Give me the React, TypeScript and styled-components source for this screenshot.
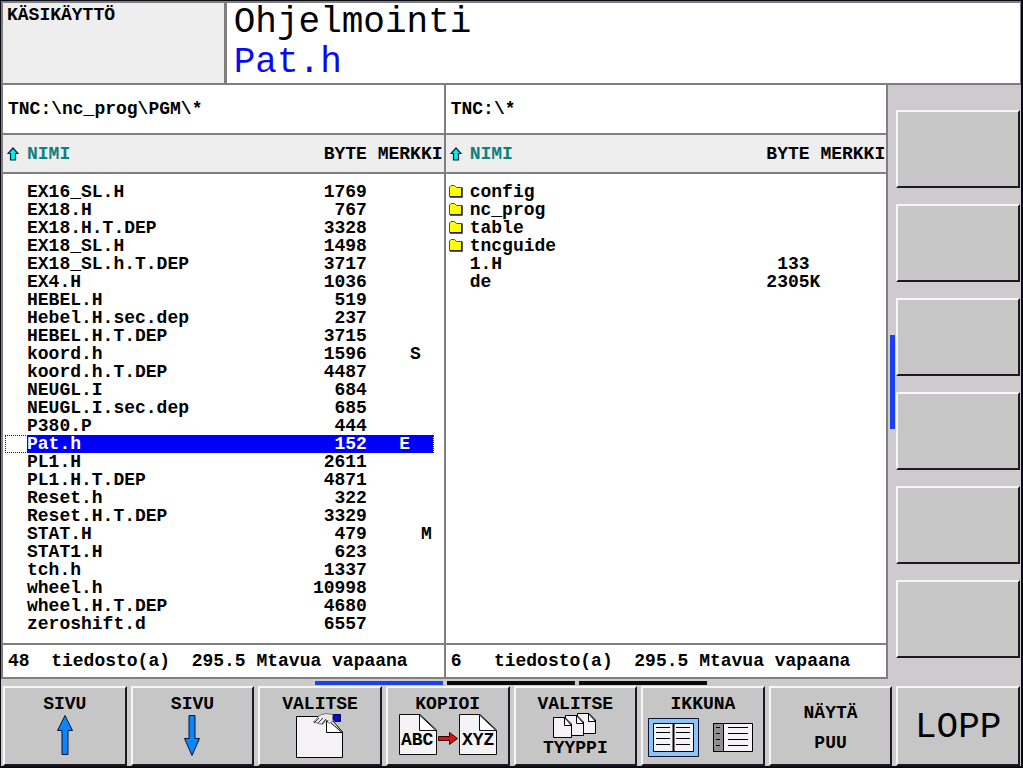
import React from "react";
import styled, { createGlobalStyle, css } from "styled-components";

const mono = `"Liberation Mono", "DejaVu Sans Mono", monospace`;
const line = "#7f7f7f";

const GlobalStyle = createGlobalStyle`
  *, *::before, *::after { box-sizing: border-box; }
  body { margin: 0; background: #cdcbce; }
  button { font: inherit; color: inherit; }
`;

const Screen = styled.div`
  min-height: 100vh;
  display: flex;
  flex-direction: column;
  background: #cdcbce;
  color: #000;
  font: bold 18px/18px ${mono};
  border: 1px solid #0a0a14;
  border-right-width: 2px;
  border-bottom-width: 2px;
`;

const Header = styled.header`
  display: grid;
  grid-template-columns: 22% 1fr;
  border: 2px solid ${line};
  border-right-width: 1px;
`;

const Mode = styled.div`
  background: #efeeef;
  padding: 3px 4px;
  border-right: 3px solid ${line};
`;

const Titles = styled.div`
  background: #fefffe;
  padding: 0 7px;
  font: 36px/40px ${mono};
`;

const Title = styled.h1`
  margin: 0;
  font: inherit;
`;

const FileName = styled.p`
  margin: 0;
  color: #0a0af0;
`;

const Middle = styled.main`
  flex: 1;
  display: grid;
  grid-template-columns: repeat(8, minmax(0, 1fr));
  gap: 4px;
  padding: 0 1px 0 2px;
`;

const Workspace = styled.div`
  grid-column: span 7;
  display: flex;
`;

const Panes = styled.div`
  flex: 1;
  display: grid;
  grid-template-columns: 1fr 1fr;
  margin-left: -2px;
  border-left: 2px solid ${line};
`;

const Pane = styled.section`
  display: flex;
  flex-direction: column;
  min-width: 0;
  background: #fefffe;
  border-right: 2px solid ${line};
  border-bottom: 2px solid ${line};
`;

const Path = styled.h2`
  margin: 0;
  padding: 15px 5px;
  font: inherit;
  border-bottom: 2px solid ${line};
`;

const Files = styled.table`
  width: 100%;
  table-layout: fixed;
  border-spacing: 0;

  tbody::before {
    content: "";
    display: block;
    height: 9px;
  }
`;

const Col = styled.col<{ $w?: number }>`
  ${(p) => p.$w && css`width: ${p.$w}px;`}
`;

const HeadCell = styled.th<{ $right?: boolean; $active?: boolean }>`
  height: 39px;
  padding: 0;
  background: #efeeef;
  border-bottom: 2px solid ${line};
  color: ${(p) => (p.$active ? "#0d8080" : "#000")};
  font: inherit;
  text-align: ${(p) => (p.$right ? "right" : "left")};
  white-space: pre;

  svg { display: block; margin-left: 4px; }
`;

const Cell = styled.td<{ $right?: boolean }>`
  height: 18px;
  padding: 0;
  text-align: ${(p) => (p.$right ? "right" : "left")};
  white-space: pre;

  svg { display: block; margin-left: 2px; }
`;

const Row = styled.tr<{ $selected?: boolean }>`
  ${(p) =>
    p.$selected &&
    css`
      position: relative;
      color: #fff;

      ${Cell}:not(:first-child):not(:last-child) { background: #0000fa; }

      ${Cell}:first-child::after {
        content: "";
        position: absolute;
        inset: 0 10px 0 2px;
        border: 1px dotted #222;
      }
    `}
`;

const Status = styled.footer`
  margin-top: auto;
  padding: 7px 5px;
  border-top: 2px solid ${line};
  white-space: pre;
`;

const SideScroll = styled.div`
  width: 4px;
  padding-left: 2px;
  display: flex;
  align-items: center;
`;

const SideThumb = styled.div`
  flex: none;
  width: 5px;
  height: 94px;
  background: #1c40f0;
`;

const SideKeys = styled.nav`
  display: flex;
  flex-direction: column;
  gap: 16px;
  padding: 25px 0 20px;
`;

const Key = styled.button<{ $big?: boolean; $centered?: boolean }>`
  display: flex;
  flex-direction: column;
  align-items: center;
  justify-content: ${(p) => (p.$centered ? "center" : "flex-start")};
  gap: ${(p) => (p.$centered ? "12px" : "0")};
  min-width: 0;
  min-height: 78px;
  padding: ${(p) => (p.$centered ? "4px 0 0" : "7px 0 0")};
  background: #c6c6c6;
  border: 2px solid;
  border-color: #f6f6f6 #1c1a1e #1c1a1e #f6f6f6;
  border-radius: 0;
  ${(p) => p.$big && css`font: 36px/40px ${mono};`}

  svg { display: block; flex: none; }
`;

const Pages = styled.div`
  display: flex;
  justify-content: center;
  gap: 4px;
  padding: 2px 0 1px;
`;

const PageMark = styled.span<{ $active?: boolean }>`
  width: 128px;
  height: 4px;
  background: ${(p) => (p.$active ? "#1c40f0" : "#0a0a0a")};
`;

const SoftKeys = styled.nav`
  display: grid;
  grid-template-columns: repeat(8, minmax(0, 1fr));
  gap: 4px;
  padding: 0 1px 0 2px;

  ${Key} { min-height: 80px; }
`;

const SortArrow = () => (
  <svg width="12" height="14" viewBox="0 0 12 14" aria-hidden="true">
    <path d="M6 1 L11 6.500 H8.500 V13 H3.500 V6.500 H1 Z" fill="#00f0f0" stroke="#102030" strokeWidth="1.200" />
  </svg>
);

const Folder = () => (
  <svg width="16" height="16" viewBox="0 0 16 16" aria-hidden="true">
    <path d="M1.500 12.500 V3 L3 1.500 H6.500 L8.500 3.500 H13.500 V12.500 H1.500 Z" fill="#ffff00" stroke="#55551a" />
    <path d="M2 13 H14 V3.500" fill="none" stroke="#1a1a66" strokeWidth="1.500" />
  </svg>
);

const PageArrow = ({ down }: { down?: boolean }) => (
  <svg width="16" height="44" viewBox="0 0 16 44" aria-hidden="true">
    <path
      d={down ? "M5 2.500 H11 V25.500 H15.500 L8 42.500 L0.500 25.500 H5 Z" : "M8 2.500 L15.500 17.500 H11 V41.500 H5 V17.500 H0.500 Z"}
      fill="#0a85fa"
      stroke="#0a1430"
    />
  </svg>
);

const SelectIcon = () => (
  <svg width="50" height="48" viewBox="0 0 50 48" aria-hidden="true">
    <path d="M1.500 3.500 H34 L47.500 19 V44.500 H1.500 Z" fill="#f5f3f6" stroke="#000" />
    <path d="M31.500 6 V19.500 H47 Z" fill="#fff" stroke="#000" />
    <path d="M18.500 9 L25 2 L31 0.500 L38 1.500 V8 L34 10.500 L31 7 L28 11 H25 L22 10 Z" fill="#e9e7ea" stroke="#777" />
    <path d="M19 10 L24 5 M23 10 L28 5 M27 11 L31 6 M31 11 L33 7" stroke="#333" fill="none" />
    <path d="M38.500 1.500 H45.500 V8.500 H40 L38 6 Z" fill="#0808d0" stroke="#000050" />
  </svg>
);

const CopyIcon = () => (
  <svg width="98" height="44" viewBox="0 0 98 44" fontSize="18" aria-hidden="true">
    {[0, 60].map((x) => (
      <g key={x} transform={`translate(${x} 0)`}>
        <path d="M0.500 1.500 H21 L37.500 17 V41.500 H0.500 Z" fill="#f5f3f6" stroke="#111" />
        <path d="M20.500 2 V17.500 H37 Z" fill="#fff" stroke="#111" />
      </g>
    ))}
    <text x="2" y="32">ABC</text>
    <text x="63" y="32">XYZ</text>
    <path d="M39.500 23.500 H50.500 V19.500 L58.500 25.500 L50.500 31.500 V27.500 H39.500 Z" fill="#e01010" stroke="#300" />
  </svg>
);

const TypeIcon = () => (
  <svg width="46" height="26" viewBox="0 0 46 26" aria-hidden="true">
    {[[25, 0], [13, 2], [1, 4]].map(([x, y]) => (
      <g key={x} transform={`translate(${x} ${y})`}>
        <path d="M0.500 0.500 H12 L18.500 7 V20.500 H0.500 Z" fill="#f5f3f6" stroke="#000" />
        <path d="M11.500 0.500 V8.500 H18.500 Z" fill="#fff" stroke="#000" />
      </g>
    ))}
  </svg>
);

const WindowIcon = () => (
  <svg width="112" height="46" viewBox="0 0 112 46" aria-hidden="true">
    <path d="M1.500 5.500 H51.500 V43.500 H1.500 Z" fill="#8cc4fa" stroke="#0a1430" />
    <path d="M6.500 10.500 H46.500 V38.500 H6.500 Z" fill="#f5f3f6" stroke="#000" />
    <path d="M26.500 10 V39" stroke="#000" strokeWidth="2" />
    <path
      d="M9 14.500 H23 M9 19.500 H23 M9 25.500 H23 M9 31.500 H23 M29 14.500 H43 M29 19.500 H43 M29 25.500 H43 M29 31.500 H43"
      stroke="#000"
    />
    <path d="M66.500 10.500 H105.500 V38.500 H66.500 Z" fill="#f5f3f6" stroke="#000" />
    <path d="M66.500 10.500 H76.500 V38.500 H66.500 Z" fill="#909090" stroke="#000" />
    <path
      d="M69 14.500 H73 M69 20.500 H73 M69 26.500 H73 M69 32.500 H73 M81 14.500 H101 M81 20.500 H101 M81 26.500 H101 M81 32.500 H101"
      stroke="#000"
    />
  </svg>
);

type Entry = { name: string; size?: string; unit?: string; flag?: string; folder?: boolean; selected?: boolean };

const file = (name: string, size: string, flag = ""): Entry => ({ name, size, flag });

const programs: Entry[] = [
  file("EX16_SL.H", "1769"),
  file("EX18.H", "767"),
  file("EX18.H.T.DEP", "3328"),
  file("EX18_SL.H", "1498"),
  file("EX18_SL.h.T.DEP", "3717"),
  file("EX4.H", "1036"),
  file("HEBEL.H", "519"),
  file("Hebel.H.sec.dep", "237"),
  file("HEBEL.H.T.DEP", "3715"),
  file("koord.h", "1596", "   S"),
  file("koord.h.T.DEP", "4487"),
  file("NEUGL.I", "684"),
  file("NEUGL.I.sec.dep", "685"),
  file("P380.P", "444"),
  { ...file("Pat.h", "152", "  E"), selected: true },
  file("PL1.H", "2611"),
  file("PL1.H.T.DEP", "4871"),
  file("Reset.h", "322"),
  file("Reset.H.T.DEP", "3329"),
  file("STAT.H", "479", "    M"),
  file("STAT1.H", "623"),
  file("tch.h", "1337"),
  file("wheel.h", "10998"),
  file("wheel.H.T.DEP", "4680"),
  file("zeroshift.d", "6557"),
];

const root: Entry[] = [
  { name: "config", folder: true },
  { name: "nc_prog", folder: true },
  { name: "table", folder: true },
  { name: "tncguide", folder: true },
  file("1.H", "133"),
  { name: "de", size: "2305", unit: "K" },
];

const FilePane = ({ path, entries, status }: { path: string; entries: Entry[]; status: string }) => (
  <Pane>
    <Path>{path}</Path>
    <Files>
      <colgroup>
        <Col $w={24} />
        <Col />
        <Col $w={77} />
        <Col $w={55} />
        <Col $w={11} />
      </colgroup>
      <thead>
        <tr>
          <HeadCell><SortArrow /></HeadCell>
          <HeadCell $active scope="col">NIMI</HeadCell>
          <HeadCell $right scope="col">{"BYTE "}</HeadCell>
          <HeadCell colSpan={2} scope="col">MERKKI</HeadCell>
        </tr>
      </thead>
      <tbody>
        {entries.map((e) => (
          <Row key={e.name} $selected={e.selected} aria-selected={e.selected}>
            <Cell>{e.folder && <Folder />}</Cell>
            <Cell>{e.name}</Cell>
            <Cell $right>{e.size && e.size + (e.unit ?? " ")}</Cell>
            <Cell>{e.flag}</Cell>
            <Cell />
          </Row>
        ))}
      </tbody>
    </Files>
    <Status>{status}</Status>
  </Pane>
);

export default function App() {
  return (
    <>
      <GlobalStyle />
      <Screen>
        <Header>
          <Mode>KÄSIKÄYTTÖ</Mode>
          <Titles>
            <Title>Ohjelmointi</Title>
            <FileName>Pat.h</FileName>
          </Titles>
        </Header>
        <Middle>
          <Workspace>
            <Panes>
              <FilePane path="TNC:\nc_prog\PGM\*" entries={programs} status="48  tiedosto(a)  295.5 Mtavua vapaana" />
              <FilePane path="TNC:\*" entries={root} status="6   tiedosto(a)  295.5 Mtavua vapaana" />
            </Panes>
            <SideScroll><SideThumb /></SideScroll>
          </Workspace>
          <SideKeys>
            {[1, 2, 3, 4, 5, 6].map((n) => (
              <Key key={n} type="button" aria-label={`F${n}`} />
            ))}
          </SideKeys>
        </Middle>
        <Pages>
          <PageMark $active />
          <PageMark />
          <PageMark />
        </Pages>
        <SoftKeys>
          <Key type="button"><span>SIVU</span><PageArrow /></Key>
          <Key type="button"><span>SIVU</span><PageArrow down /></Key>
          <Key type="button"><span>VALITSE</span><SelectIcon /></Key>
          <Key type="button"><span>KOPIOI</span><CopyIcon /></Key>
          <Key type="button"><span>VALITSE</span><TypeIcon /><span>TYYPPI</span></Key>
          <Key type="button"><span>IKKUNA</span><WindowIcon /></Key>
          <Key type="button" $centered><span>NÄYTÄ</span><span>PUU</span></Key>
          <Key type="button" $big $centered>LOPP</Key>
        </SoftKeys>
      </Screen>
    </>
  );
}
